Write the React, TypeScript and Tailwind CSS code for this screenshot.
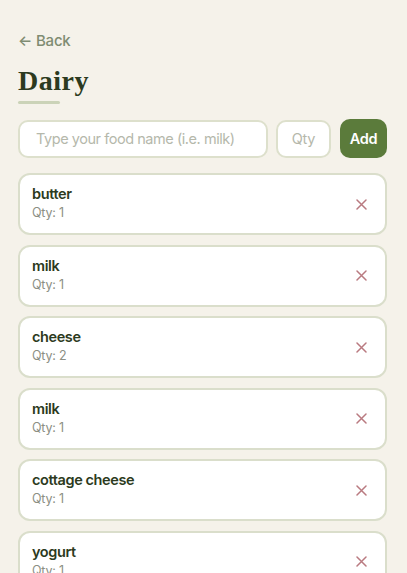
import React from "react";

const items = [
  { name: "butter", qty: 1 },
  { name: "milk", qty: 1 },
  { name: "cheese", qty: 2 },
  { name: "milk", qty: 1 },
  { name: "cottage cheese", qty: 1 },
  { name: "yogurt", qty: 1 },
];

export default function App() {
  return (
    <div className="h-[573px] overflow-hidden bg-[#f5f2ea] pl-[18px] pr-[20px] pt-[31px]" style={{ fontFamily: "Inter, 'Noto Sans', sans-serif" }}>
      <div className="text-[15px] leading-[20px] text-[#7f8c72] font-medium tracking-[-0.2px]">← Back</div>
      <h1 className="mt-[14px] text-[28px] leading-[32px] font-bold text-[#2c3a20] tracking-[0.5px]" style={{ fontFamily: "'Liberation Serif', 'DejaVu Serif', serif" }}>Dairy</h1>
      <div className="mt-[4px] h-[3px] w-[42px] bg-[#cbd3b8] rounded-full" />
      <div className="mt-[15px] flex items-center">
        <div className="h-[38px] w-[250px] shrink-0 rounded-[10px] border-2 border-[#dde0cc] bg-white flex items-center px-[16px] text-[14.5px] tracking-[-0.45px] whitespace-nowrap text-[#b5b8ab]">Type your food name (i.e. milk)</div>
        <div className="ml-[8px] h-[38px] w-[55px] shrink-0 rounded-[10px] border-2 border-[#dde0cc] bg-white flex items-center justify-center text-[14.5px] tracking-[-0.3px] text-[#b5b8ab]">Qty</div>
        <div className="ml-[9px] h-[39px] flex-1 rounded-[10px] bg-[#5b7b3b] flex items-center justify-center text-[14.5px] tracking-[-0.3px] font-semibold text-white">Add</div>
      </div>
      <div className="mt-[15px] flex flex-col gap-[9.5px]">
        {items.map((it, i) => (
          <div key={i} className="h-[62px] shrink-0 rounded-[12px] border-2 border-[#dadecb] bg-white flex items-center justify-between pl-[12px] pr-[18px]">
            <div className="flex flex-col -mt-[3px]">
              <div className="text-[14.5px] leading-[20px] font-semibold tracking-[-0.4px] text-[#2c3a20]">{it.name}</div>
              <div className="text-[12.5px] leading-[16px] mt-[1px] tracking-[-0.2px] text-[#8c8f84]">Qty: {it.qty}</div>
            </div>
            <svg width="11" height="11" viewBox="0 0 11 11" className="text-[#b97a80]">
              <path d="M1 1L10 10M10 1L1 10" stroke="currentColor" strokeWidth="1.5" strokeLinecap="round" />
            </svg>
          </div>
        ))}
      </div>
    </div>
  );
}
